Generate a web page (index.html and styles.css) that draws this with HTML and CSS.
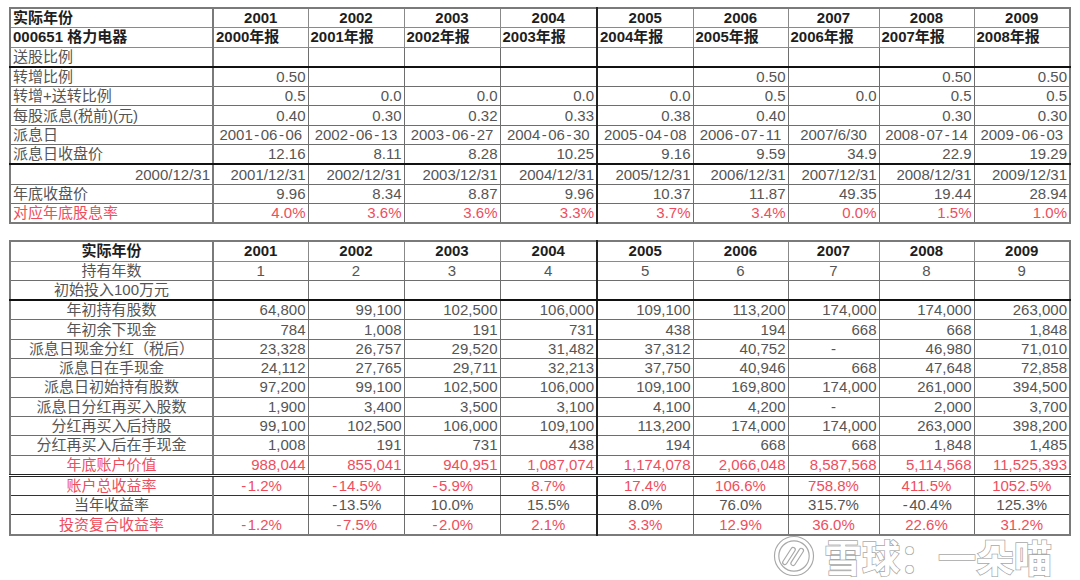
FILE: index.html
```html
<!DOCTYPE html>
<html lang="zh">
<head>
<meta charset="utf-8">
<title>格力电器 分红再投资</title>
<link rel="stylesheet" href="styles.css">
</head>
<body>
<table class="sheet sheet-a">
<colgroup>
<col class="w-label"><col class="w95"><col class="w96"><col class="w96"><col class="w97"><col class="w96"><col class="w95"><col class="w91"><col class="w95"><col class="w96">
</colgroup>
<tr class="hd">
<td class="l">实际年份</td><td class="c">2001</td><td class="c">2002</td><td class="c">2003</td><td class="c">2004</td><td class="c">2005</td><td class="c">2006</td><td class="c">2007</td><td class="c">2008</td><td class="c">2009</td>
</tr>
<tr class="hd">
<td class="l">000651 格力电器</td><td class="l">2000年报</td><td class="l">2001年报</td><td class="l">2002年报</td><td class="l">2003年报</td><td class="l">2004年报</td><td class="l">2005年报</td><td class="l">2006年报</td><td class="l">2007年报</td><td class="l">2008年报</td>
</tr>
<tr class="thick">
<td class="l">送股比例</td><td></td><td></td><td></td><td></td><td></td><td></td><td></td><td></td><td></td>
</tr>
<tr>
<td class="l">转增比例</td><td>0.50</td><td></td><td></td><td></td><td></td><td>0.50</td><td></td><td>0.50</td><td>0.50</td>
</tr>
<tr>
<td class="l">转增+送转比例</td><td>0.5</td><td>0.0</td><td>0.0</td><td>0.0</td><td>0.0</td><td>0.5</td><td>0.0</td><td>0.5</td><td>0.5</td>
</tr>
<tr>
<td class="l">每股派息(税前)(元)</td><td>0.40</td><td>0.30</td><td>0.32</td><td>0.33</td><td>0.38</td><td>0.40</td><td></td><td>0.30</td><td>0.30</td>
</tr>
<tr>
<td class="l">派息日</td><td class="c">2001<span class="dh">-</span>06<span class="dh">-</span>06</td><td class="c">2002<span class="dh">-</span>06<span class="dh">-</span>13</td><td class="c">2003<span class="dh">-</span>06<span class="dh">-</span>27</td><td class="c">2004<span class="dh">-</span>06<span class="dh">-</span>30</td><td class="c">2005<span class="dh">-</span>04<span class="dh">-</span>08</td><td class="c">2006<span class="dh">-</span>07<span class="dh">-</span>11</td><td class="c">2007/6/30</td><td class="c">2008<span class="dh">-</span>07<span class="dh">-</span>14</td><td class="c">2009<span class="dh">-</span>06<span class="dh">-</span>03</td>
</tr>
<tr class="thick">
<td class="l">派息日收盘价</td><td>12.16</td><td>8.11</td><td>8.28</td><td>10.25</td><td>9.16</td><td>9.59</td><td>34.9</td><td>22.9</td><td>19.29</td>
</tr>
<tr>
<td>2000/12/31</td><td>2001/12/31</td><td>2002/12/31</td><td>2003/12/31</td><td>2004/12/31</td><td>2005/12/31</td><td>2006/12/31</td><td>2007/12/31</td><td>2008/12/31</td><td>2009/12/31</td>
</tr>
<tr>
<td class="l">年底收盘价</td><td>9.96</td><td>8.34</td><td>8.87</td><td>9.96</td><td>10.37</td><td>11.87</td><td>49.35</td><td>19.44</td><td>28.94</td>
</tr>
<tr class="red">
<td class="l">对应年底股息率</td><td>4.0%</td><td>3.6%</td><td>3.6%</td><td>3.3%</td><td>3.7%</td><td>3.4%</td><td>0.0%</td><td>1.5%</td><td>1.0%</td>
</tr>
</table>

<table class="sheet sheet-b">
<colgroup>
<col class="w-label"><col class="w95"><col class="w96"><col class="w96"><col class="w97"><col class="w96"><col class="w95"><col class="w91"><col class="w95"><col class="w96">
</colgroup>
<tr class="hd">
<td class="c">实际年份</td><td class="c">2001</td><td class="c">2002</td><td class="c">2003</td><td class="c">2004</td><td class="c">2005</td><td class="c">2006</td><td class="c">2007</td><td class="c">2008</td><td class="c">2009</td>
</tr>
<tr class="ctr">
<td>持有年数</td><td>1</td><td>2</td><td>3</td><td>4</td><td>5</td><td>6</td><td>7</td><td>8</td><td>9</td>
</tr>
<tr class="thick">
<td class="c">初始投入100万元</td><td></td><td></td><td></td><td></td><td></td><td></td><td></td><td></td><td></td>
</tr>
<tr>
<td class="c">年初持有股数</td><td>64,800</td><td>99,100</td><td>102,500</td><td>106,000</td><td>109,100</td><td>113,200</td><td>174,000</td><td>174,000</td><td>263,000</td>
</tr>
<tr>
<td class="c">年初余下现金</td><td>784</td><td>1,008</td><td>191</td><td>731</td><td>438</td><td>194</td><td>668</td><td>668</td><td>1,848</td>
</tr>
<tr>
<td class="c">派息日现金分红（税后）</td><td>23,328</td><td>26,757</td><td>29,520</td><td>31,482</td><td>37,312</td><td>40,752</td><td class="c">-</td><td>46,980</td><td>71,010</td>
</tr>
<tr>
<td class="c">派息日在手现金</td><td>24,112</td><td>27,765</td><td>29,711</td><td>32,213</td><td>37,750</td><td>40,946</td><td>668</td><td>47,648</td><td>72,858</td>
</tr>
<tr>
<td class="c">派息日初始持有股数</td><td>97,200</td><td>99,100</td><td>102,500</td><td>106,000</td><td>109,100</td><td>169,800</td><td>174,000</td><td>261,000</td><td>394,500</td>
</tr>
<tr>
<td class="c">派息日分红再买入股数</td><td>1,900</td><td>3,400</td><td>3,500</td><td>3,100</td><td>4,100</td><td>4,200</td><td class="c">-</td><td>2,000</td><td>3,700</td>
</tr>
<tr>
<td class="c">分红再买入后持股</td><td>99,100</td><td>102,500</td><td>106,000</td><td>109,100</td><td>113,200</td><td>174,000</td><td>174,000</td><td>263,000</td><td>398,200</td>
</tr>
<tr>
<td class="c">分红再买入后在手现金</td><td>1,008</td><td>191</td><td>731</td><td>438</td><td>194</td><td>668</td><td>668</td><td>1,848</td><td>1,485</td>
</tr>
<tr class="red double">
<td class="c">年底账户价值</td><td>988,044</td><td>855,041</td><td>940,951</td><td>1,087,074</td><td>1,174,078</td><td>2,066,048</td><td>8,587,568</td><td>5,114,568</td><td>11,525,393</td>
</tr>
<tr class="red ctr dark">
<td>账户总收益率</td><td><span class="dh">-</span>1.2%</td><td><span class="dh">-</span>14.5%</td><td><span class="dh">-</span>5.9%</td><td>8.7%</td><td>17.4%</td><td>106.6%</td><td>758.8%</td><td>411.5%</td><td>1052.5%</td>
</tr>
<tr class="ctr dark">
<td>当年收益率</td><td></td><td><span class="dh">-</span>13.5%</td><td>10.0%</td><td>15.5%</td><td>8.0%</td><td>76.0%</td><td>315.7%</td><td><span class="dh">-</span>40.4%</td><td>125.3%</td>
</tr>
<tr class="red ctr dark">
<td>投资复合收益率</td><td><span class="dh">-</span>1.2%</td><td><span class="dh">-</span>7.5%</td><td><span class="dh">-</span>2.0%</td><td>2.1%</td><td>3.3%</td><td>12.9%</td><td>36.0%</td><td>22.6%</td><td>31.2%</td>
</tr>
</table>

<div class="watermark">
<svg class="wm-logo" viewBox="0 0 46 46" width="42" height="42" aria-hidden="true">
<circle cx="23" cy="23" r="19" fill="none" stroke="#a8a8a8" stroke-width="6"/>
<circle cx="23" cy="23" r="19" fill="none" stroke="#ffffff" stroke-width="3.5"/>
<path d="M13 30 L22 16 M22 31 L31 17" fill="none" stroke="#a8a8a8" stroke-width="6" stroke-linecap="round"/>
<path d="M13 30 L22 16 M22 31 L31 17" fill="none" stroke="#ffffff" stroke-width="3.5" stroke-linecap="round"/>
</svg>
<span class="wm-text">雪球：一朵喵</span>
</div>
</body>
</html>
```

FILE: styles.css
```css
html, body {
  margin: 0;
  padding: 0;
  background: #ffffff;
}
body {
  padding: 7px 0 0 9px;
  font-family: "Liberation Sans", "Noto Sans CJK SC", sans-serif;
  font-size: 15px;
  color: #555555;
}
.sheet {
  border-collapse: collapse;
  table-layout: fixed;
  width: 1060px;
  border: 2px solid #7a7a7a;
}
.sheet-b {
  margin-top: 16px;
}
.w-label { width: 203px; }
.w91 { width: 91px; }
.w95 { width: 95px; }
.w96 { width: 96px; }
.w97 { width: 97px; }

.sheet td {
  height: 18.3px;
  padding: 0 2px;
  line-height: 16px;
  text-align: right;
  white-space: nowrap;
  overflow: hidden;
  border: 1px solid #6e6e6e;
  vertical-align: middle;
}
.sheet td:first-child {
  border-right: 2px solid #7a7a7a;
}
.sheet td:nth-child(5) {
  border-right: 2px solid #222222;
}
.sheet td.l { text-align: left; }
.sheet td.c { text-align: center; }
.sheet tr.ctr td { text-align: center; }

.sheet tr.hd td {
  font-weight: bold;
  color: #1e1e1e;
  border-color: #8a8a8a;
}
.sheet tr.hd td:nth-child(5) { border-right: 2px solid #222222; }
.sheet tr.hd td:first-child { border-right: 2px solid #7a7a7a; }

.sheet tr.thick td {
  border-bottom: 2px solid #111111;
}
.sheet tr.double td {
  border-bottom: 3px double #222222;
}
.sheet tr.dark td {
  border-top-color: #333333;
  border-bottom-color: #333333;
}
.sheet tr.red td {
  color: #ef4d5d;
}
.dh {
  margin: 0 1.5px;
}

.watermark {
  position: absolute;
  left: 773px;
  top: 535px;
  display: flex;
  align-items: center;
  gap: 9px;
  pointer-events: none;
}
.wm-text {
  font-family: "Noto Sans CJK SC", sans-serif;
  font-weight: bold;
  font-size: 38px;
  line-height: 40px;
  letter-spacing: 0;
  color: #ffffff;
  -webkit-text-stroke: 1.5px #a8a8a8;
  paint-order: stroke fill;
}
```
